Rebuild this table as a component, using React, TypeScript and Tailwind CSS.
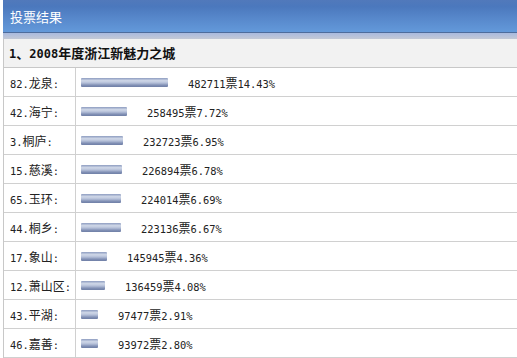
import React from "react";

const rows: [string, string, number][] = [
  ["82.龙泉:", "482711票14.43%", 14.43],
  ["42.海宁:", "258495票7.72%", 7.72],
  ["3.桐庐:", "232723票6.95%", 6.95],
  ["15.慈溪:", "226894票6.78%", 6.78],
  ["65.玉环:", "224014票6.69%", 6.69],
  ["44.桐乡:", "223136票6.67%", 6.67],
  ["17.象山:", "145945票4.36%", 4.36],
  ["12.萧山区:", "136459票4.08%", 4.08],
  ["43.平湖:", "97477票2.91%", 2.91],
  ["46.嘉善:", "93972票2.80%", 2.8],
];

function Mixed({ text }: { text: string }) {
  const parts = text.split(/([\x00-\x7F]+)/).filter((p) => p.length > 0);
  return (
    <span className="whitespace-nowrap">
      {parts.map((p, i) =>
        /^[\x00-\x7F]+$/.test(p) ? (
          <span key={i} className="font-['DejaVu_Sans_Mono',monospace] text-[10.4px]">
            {p}
          </span>
        ) : (
          <span key={i} className="font-['Noto_Sans_CJK_SC',sans-serif] text-[12px]">
            {p}
          </span>
        )
      )}
    </span>
  );
}

export default function App() {
  return (
    <div className="w-[517px] h-[358px] bg-white overflow-hidden pl-[3px]">
      <div className="h-[32px] bg-[linear-gradient(to_bottom,#5179bb,#4b78bd_20%,#5889cc_60%,#6399da)] flex items-center pl-[7px]">
        <span className="text-white text-[13px] font-['Noto_Sans_CJK_SC',sans-serif] leading-none">
          投票结果
        </span>
      </div>
      <div className="h-px bg-[#4d6c9c]" />
      <div className="h-[6px] bg-[linear-gradient(to_bottom,#a9bade,#c3c9d6)]" />
      <div className="border-l border-[#c8c8c8]">
        <div className="h-[29px] bg-[#f2f2f2] border-b border-[#c8c8c8] flex items-center pl-[5px]">
          <span className="font-bold text-[13px] text-[#111] leading-none whitespace-nowrap">
            <span className="font-['DejaVu_Sans_Mono',monospace] text-[12px]">1</span>
            <span className="font-['Noto_Sans_CJK_SC',sans-serif]">、</span>
            <span className="font-['DejaVu_Sans_Mono',monospace] text-[12px]">2008</span>
            <span className="font-['Noto_Sans_CJK_SC',sans-serif]">年度浙江新魅力之城</span>
          </span>
        </div>
        {rows.map(([label, value, pct]) => (
          <div key={label} className="h-[29px] border-b border-[#d0d0d0] flex text-[#222] leading-none">
            <div className="w-[72px] border-r border-[#d0d0d0] flex items-center pl-[6px]">
              <Mixed text={label} />
            </div>
            <div className="flex-1 flex items-center pl-[5px]">
              <div
                className="h-[9px] rounded-[1px] bg-[linear-gradient(to_bottom,#8d9cc0,#d0d8e8_30%,#b4bfd8_55%,#8190b5_80%,#6f7fa6)]"
                style={{ width: `${Math.round(pct * 6)}px` }}
              />
              <span className="ml-[20px]">
                <Mixed text={value} />
              </span>
            </div>
          </div>
        ))}
      </div>
    </div>
  );
}
